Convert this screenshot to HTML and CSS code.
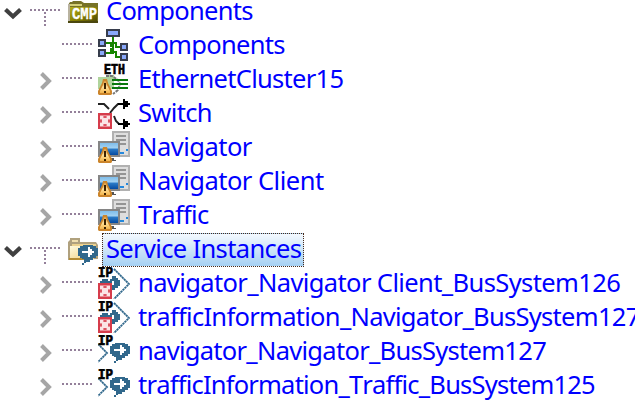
FILE: index.html
```
<!DOCTYPE html>
<html lang="en">
<head>
<meta charset="utf-8">
<title>Components</title>
<link rel="stylesheet" href="styles.css">
</head>
<body>
<svg class="defs" aria-hidden="true">
  <defs>
    <linearGradient id="olive" x2="1" y2="1"><stop stop-color="#b5ad1c"/><stop offset=".6" stop-color="#817a00"/><stop offset="1" stop-color="#4f4a08"/></linearGradient>
    <linearGradient id="cream" x2="1" y2="1"><stop stop-color="#fffbe0"/><stop offset="1" stop-color="#f0cd78"/></linearGradient>
    <linearGradient id="screen" x2="0" y2="1"><stop stop-color="#7fbdea"/><stop offset=".42" stop-color="#a3d2f2"/><stop offset=".5" stop-color="#2c7cc8"/><stop offset="1" stop-color="#064aa0"/></linearGradient>
    <linearGradient id="amber" x2="0" y2="1"><stop stop-color="#d99b45"/><stop offset=".5" stop-color="#ffe29a"/><stop offset="1" stop-color="#f3b54d"/></linearGradient>
    <symbol id="down" viewBox="0 0 20 34"><path d="M2.5 14.5 10 21.5 17.5 14.5" fill="none" stroke="#404040" stroke-width="4.2"/></symbol>
    <symbol id="right" viewBox="0 0 20 34"><path d="M5.5 10.5 13 18 5.5 25.5" fill="none" stroke="#a6a6a6" stroke-width="4"/></symbol>
    <symbol id="lines" viewBox="0 0 30 34"><path d="M0 15H30" stroke="#94809a" stroke-width="2" stroke-dasharray="2 2"/></symbol>
    <symbol id="branch" viewBox="0 0 30 34"><path d="M0 15H30M15 17V31" fill="none" stroke="#94809a" stroke-width="2" stroke-dasharray="2 2"/></symbol>
    <symbol id="warning" viewBox="0 0 14 16"><path d="M5 0H9L10 4 12 8 14 12V15L13 16H1L0 15V12L2 8 4 4Z" fill="#cc852b"/><path d="M6 2H8L9 6 12 12V14H2V12L5 6Z" fill="url(#amber)"/><path d="M6 4H8V10H6ZM6 12H8V14H6Z" fill="#3b2100"/></symbol>
    <symbol id="error" viewBox="0 0 14 16"><path d="M0 0H14V16H0Z" fill="#d63c4b"/><path d="M2 2H12V14H2Z" fill="#e98c95"/><path d="M2 3H5V5H9V3H12V6H10V10H12V13H9V11H5V13H2V10H4V6H2Z" fill="#fbe4e6"/><path d="M6 3H8V5H6ZM6 11H8V13H6ZM2 7H4V9H2ZM10 7H12V9H10Z" fill="#dc5362"/></symbol>
    <symbol id="bubble" viewBox="0 0 20 20"><path d="M5 0H15V1H18V3H20V11H18V13H15V15H12V17H8V16H8V18H6V20H4V18H6V14H4V13H2V11H0V3H2V1H5Z" fill="#31688c"/><path d="M4 6H10V2H12V4H14V6H16V8H14V10H12V12H10V8H4Z" fill="#fff"/></symbol>
    <symbol id="cmp" viewBox="0 0 30 34">
      <path d="M0 10 2 7H4L5 6H13L16 8H30V28H0Z" fill="#777227"/><path d="M2 9H14V11H2Z" fill="#d4cf79"/><path d="M2 12H29V26H2Z" fill="url(#olive)"/><path d="M1 9V27" stroke="#b9b3a0" stroke-width="2"/><path d="M0 27H30" stroke="#4b470e" stroke-width="2"/>
      <text x="4" y="24" class="cmp-tag" textLength="25" lengthAdjust="spacingAndGlyphs">CMP</text>
    </symbol>
    <symbol id="services" viewBox="0 0 30 34">
      <path d="M0 27V9L2 7V5H12V9H28L30 12V26Z" fill="#b0a17e"/><path d="M4 7H10V9H4Z" fill="#f1dfae"/><path d="M4 11H28V13H4Z" fill="#ecd28f"/><path d="M2 13H26V26H2Z" fill="url(#cream)"/><path d="M1 26H17" stroke="#b58d35" stroke-width="2"/>
      <use href="#bubble" x="10" y="12" width="20" height="20"/>
    </symbol>
    <symbol id="network" viewBox="0 0 32 32">
      <path d="M15 7V25M8 14H13V17H15M8 24H13V20H15M15 14H18V18H24M15 23H18V28H24" fill="none" stroke="#178600" stroke-width="2"/>
      <g fill="#89a8fa" stroke="#373d4c" stroke-width="2"><path d="M9 1H21V7H9ZM1 11H7V17H1ZM1 21H7V27H1ZM23 15H29V21H23ZM23 25H29V31H23Z"/></g>
    </symbol>
    <symbol id="ethernet" viewBox="0 0 32 32">
      <path d="M0 14H8V12H16V26H0Z" fill="#b0d49c"/><path d="M8 13H14L20 17 22 21 20 27 15 31" fill="none" stroke="#777" stroke-width="2" stroke-dasharray="3 1"/>
      <path d="M14 17H30M14 21H30M14 25H30" stroke="#0a790d" stroke-width="2"/>
      <use href="#warning" y="16" width="14" height="16"/><text x="6" y="10.5" class="tag" textLength="21" lengthAdjust="spacingAndGlyphs">ETH</text>
    </symbol>
    <symbol id="switch" viewBox="0 0 32 32">
      <path d="M0 7H6L11 12M12 16 16 11 20 7H26M16 19 18 24 21 27H26" fill="none" stroke="#222" stroke-width="2"/><path d="M20 6H25V2H27V4H30V6H32V8H30V10H27V12H25V8H20ZM20 26H25V22H27V24H30V26H32V28H30V30H27V32H25V28H20Z"/>
      <use href="#error" y="16" width="14" height="16"/>
    </symbol>
    <symbol id="computer" viewBox="0 0 32 32">
      <path d="M14 0H32V26H14Z" fill="#b1b1b1"/><path d="M16 2H30V24H16Z" fill="#dedede"/><path d="M18 5H28M18 9H28M22 13H28" stroke="#959595" stroke-width="2"/><path d="M22 21H26V23H22ZM28 18H30V20H28Z" fill="#2588dc"/>
      <path d="M0 10H22V26H0Z" fill="#858585"/><path d="M2 12H20V24H2Z" fill="url(#screen)"/><path d="M12 27H16V29H18V30H12Z" fill="#555"/>
      <use href="#warning" y="16" width="14" height="16"/>
    </symbol>
    <symbol id="provided" viewBox="0 0 32 32">
      <path d="M2 14H4V12H10V14H12V12H14V9H18V11H20V13H22V19H20V21H17V23H14V18H16V14H14V18H2Z" fill="#31688c"/><path d="M16 2 31 17 16 32" fill="none" stroke="#31688c" stroke-width="1.8" stroke-dasharray="2.3 .5"/>
      <use href="#error" y="16" width="14" height="16"/><text y="10" class="tag" textLength="15" lengthAdjust="spacingAndGlyphs">IP</text>
    </symbol>
    <symbol id="consumed" viewBox="0 0 32 32">
      <path d="M0 9 9 18 0 27" fill="none" stroke="#31688c" stroke-width="1.8" stroke-dasharray="2.3 .5"/><use href="#bubble" x="12" y="8" width="20" height="20"/><text y="10" class="tag" textLength="15" lengthAdjust="spacingAndGlyphs">IP</text>
    </symbol>
  </defs>
</svg>
<main class="tree">
  <div class="row"><svg class="arrow"><use href="#down"/></svg><svg class="connector"><use href="#branch"/></svg><svg class="folder"><use href="#cmp"/></svg><span class="label group-label tight">Components</span></div>
  <div class="row child"><span class="arrow"></span><svg class="connector"><use href="#lines"/></svg><svg class="icon"><use href="#network"/></svg><span class="label tight">Components</span></div>
  <div class="row child"><svg class="arrow"><use href="#right"/></svg><svg class="connector"><use href="#lines"/></svg><svg class="icon"><use href="#ethernet"/></svg><span class="label tight">EthernetCluster15</span></div>
  <div class="row child"><svg class="arrow"><use href="#right"/></svg><svg class="connector"><use href="#lines"/></svg><svg class="icon"><use href="#switch"/></svg><span class="label snug">Switch</span></div>
  <div class="row child"><svg class="arrow"><use href="#right"/></svg><svg class="connector"><use href="#lines"/></svg><svg class="icon"><use href="#computer"/></svg><span class="label loose">Navigator</span></div>
  <div class="row child"><svg class="arrow"><use href="#right"/></svg><svg class="connector"><use href="#lines"/></svg><svg class="icon"><use href="#computer"/></svg><span class="label loose">Navigator Client</span></div>
  <div class="row child"><svg class="arrow"><use href="#right"/></svg><svg class="connector"><use href="#lines"/></svg><svg class="icon"><use href="#computer"/></svg><span class="label tight">Traffic</span></div>
  <div class="row"><svg class="arrow"><use href="#down"/></svg><svg class="connector"><use href="#branch"/></svg><svg class="folder"><use href="#services"/></svg><span class="label group-label selected snug">Service Instances</span></div>
  <div class="row child"><svg class="arrow"><use href="#right"/></svg><svg class="connector"><use href="#lines"/></svg><svg class="icon"><use href="#provided"/></svg><span class="label">navigator_Navigator Client_BusSystem126</span></div>
  <div class="row child"><svg class="arrow"><use href="#right"/></svg><svg class="connector"><use href="#lines"/></svg><svg class="icon"><use href="#provided"/></svg><span class="label tight">trafficInformation_Navigator_BusSystem127</span></div>
  <div class="row child"><svg class="arrow"><use href="#right"/></svg><svg class="connector"><use href="#lines"/></svg><svg class="icon"><use href="#consumed"/></svg><span class="label tight">navigator_Navigator_BusSystem127</span></div>
  <div class="row child"><svg class="arrow"><use href="#right"/></svg><svg class="connector"><use href="#lines"/></svg><svg class="icon"><use href="#consumed"/></svg><span class="label tightest">trafficInformation_Traffic_BusSystem125</span></div>
</main>
</body>
</html>
```
FILE: styles.css
```
html, body { margin: 0; height: 100%; overflow: hidden; background: #fff; }
.defs { display: block; width: 0; height: 0; }
.tree { margin-top: -5px; }
.row { display: flex; height: 34px; padding-left: 3px; }
.child { padding-left: 36px; }
.arrow { width: 20px; height: 34px; flex: none; }
.connector { width: 30px; height: 34px; margin-left: 7px; flex: none; }
.child .connector { margin-left: 6px; }
.folder { width: 30px; height: 34px; margin-left: 8px; flex: none; }
.icon { width: 32px; height: 32px; margin-left: 6px; flex: none; }
.label { box-sizing: border-box; height: 34px; padding-left: 8px; font: 25.5px/31px "Noto Sans", "Open Sans", sans-serif; letter-spacing: -.61px; color: #00f; white-space: nowrap; font-kerning: none; }
.loose { letter-spacing: -.5px; }
.snug { letter-spacing: -.65px; }
.tight { letter-spacing: -.71px; }
.tightest { letter-spacing: -.79px; }
.group-label { margin-left: 4px; padding-left: 4px; }
.selected { width: 202px; padding-left: 3px; line-height: 29px; border: 1px dotted #4a2a18; background: linear-gradient(#f4f9fe, #a5d0f3); }
.tag { font: bold 14px "Liberation Mono", monospace; fill: #000; stroke: #000; stroke-width: .7px; }
.cmp-tag { font: bold 16px "Liberation Mono", monospace; fill: #fff; stroke: #fff; stroke-width: .3px; }
```
